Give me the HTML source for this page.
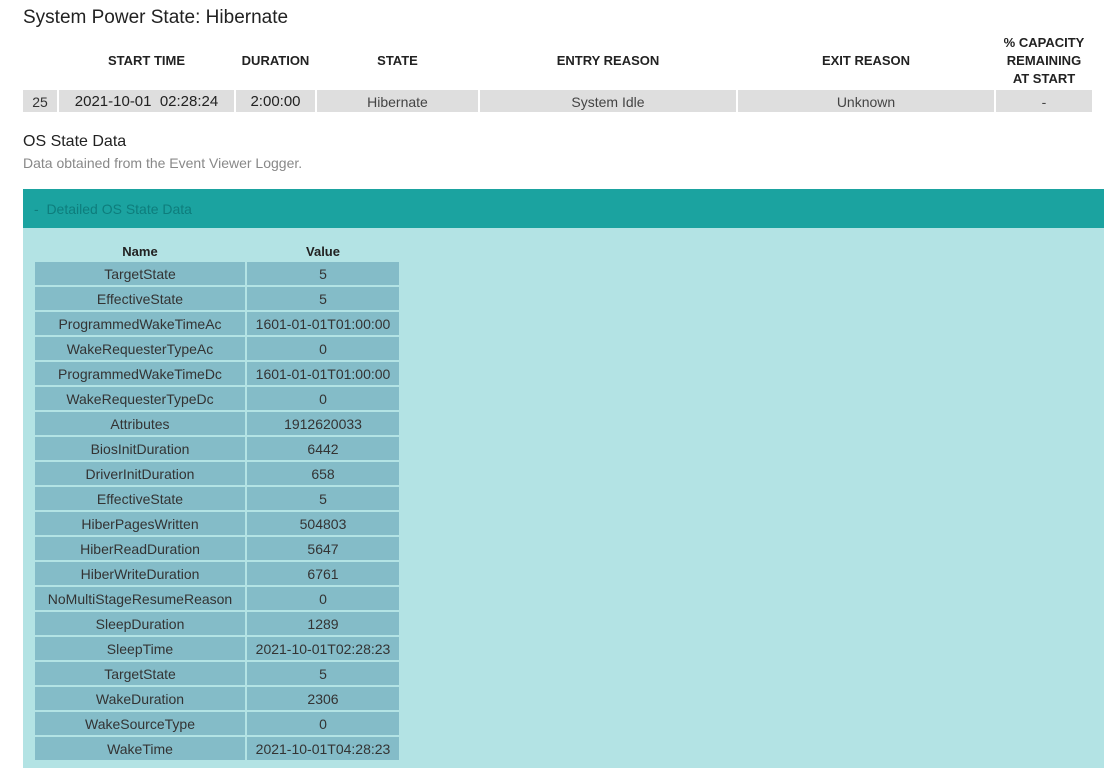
<!DOCTYPE html>
<html><head><meta charset="utf-8"><style>
*{margin:0;padding:0;box-sizing:border-box}
body{width:1104px;height:768px;background:#fff;font-family:"Liberation Sans",sans-serif;position:relative;overflow:hidden;color:#222}
.a{position:absolute}
.h{font-size:13px;font-weight:bold;color:#222;text-align:center}
.c{position:absolute;top:90px;height:22px;background:#dedede;font-size:14px;line-height:24px;text-align:center;color:#444}
.r{position:absolute;height:23px;background:#84bcc8;font-size:14px;line-height:25px;text-align:center;color:#333}
</style></head><body>
<div class="a" style="left:23px;top:7px;font-size:19px;color:#222">System Power State: Hibernate</div>
<div class="a h" style="left:59px;top:53px;width:175px">START TIME</div>
<div class="a h" style="left:236px;top:53px;width:79px">DURATION</div>
<div class="a h" style="left:317px;top:53px;width:161px">STATE</div>
<div class="a h" style="left:480px;top:53px;width:256px">ENTRY REASON</div>
<div class="a h" style="left:738px;top:53px;width:256px">EXIT REASON</div>
<div class="a h" style="left:996px;top:34px;width:96px;line-height:18px">% CAPACITY<br>REMAINING<br>AT START</div>
<div class="c" style="left:23px;width:34px;color:#333">25</div>
<div class="c" style="left:59px;width:175px;color:#222;font-size:15px">2021-10-01&nbsp; 02:28:24</div>
<div class="c" style="left:236px;width:79px;color:#222;font-size:15px">2:00:00</div>
<div class="c" style="left:317px;width:161px">Hibernate</div>
<div class="c" style="left:480px;width:256px">System Idle</div>
<div class="c" style="left:738px;width:256px">Unknown</div>
<div class="c" style="left:996px;width:96px">-</div>
<div class="a" style="left:23px;top:133px;font-size:16px;color:#222">OS State Data</div>
<div class="a" style="left:23px;top:155px;font-size:14px;color:#888">Data obtained from the Event Viewer Logger.</div>
<div class="a" style="left:23px;top:189px;width:1081px;height:39px;background:#1ba3a0;color:#0e7d7c;font-size:14px;line-height:41px;padding-left:11px">-&nbsp; Detailed OS State Data</div>
<div class="a" style="left:23px;top:228px;width:1081px;height:540px;background:#b3e3e4"></div>
<div class="a h" style="left:35px;top:244px;width:210px">Name</div>
<div class="a h" style="left:247px;top:244px;width:152px">Value</div>
<div id="t"></div>
<script>
var d=[["TargetState","5"],["EffectiveState","5"],["ProgrammedWakeTimeAc","1601-01-01T01:00:00"],["WakeRequesterTypeAc","0"],["ProgrammedWakeTimeDc","1601-01-01T01:00:00"],["WakeRequesterTypeDc","0"],["Attributes","1912620033"],["BiosInitDuration","6442"],["DriverInitDuration","658"],["EffectiveState","5"],["HiberPagesWritten","504803"],["HiberReadDuration","5647"],["HiberWriteDuration","6761"],["NoMultiStageResumeReason","0"],["SleepDuration","1289"],["SleepTime","2021-10-01T02:28:23"],["TargetState","5"],["WakeDuration","2306"],["WakeSourceType","0"],["WakeTime","2021-10-01T04:28:23"]];
var h="";d.forEach(function(r,i){var t=262+i*25;h+='<div class="r" style="left:35px;top:'+t+'px;width:210px">'+r[0]+'</div><div class="r" style="left:247px;top:'+t+'px;width:152px">'+r[1]+'</div>';});
document.getElementById("t").innerHTML=h;
</script>
</body></html>
